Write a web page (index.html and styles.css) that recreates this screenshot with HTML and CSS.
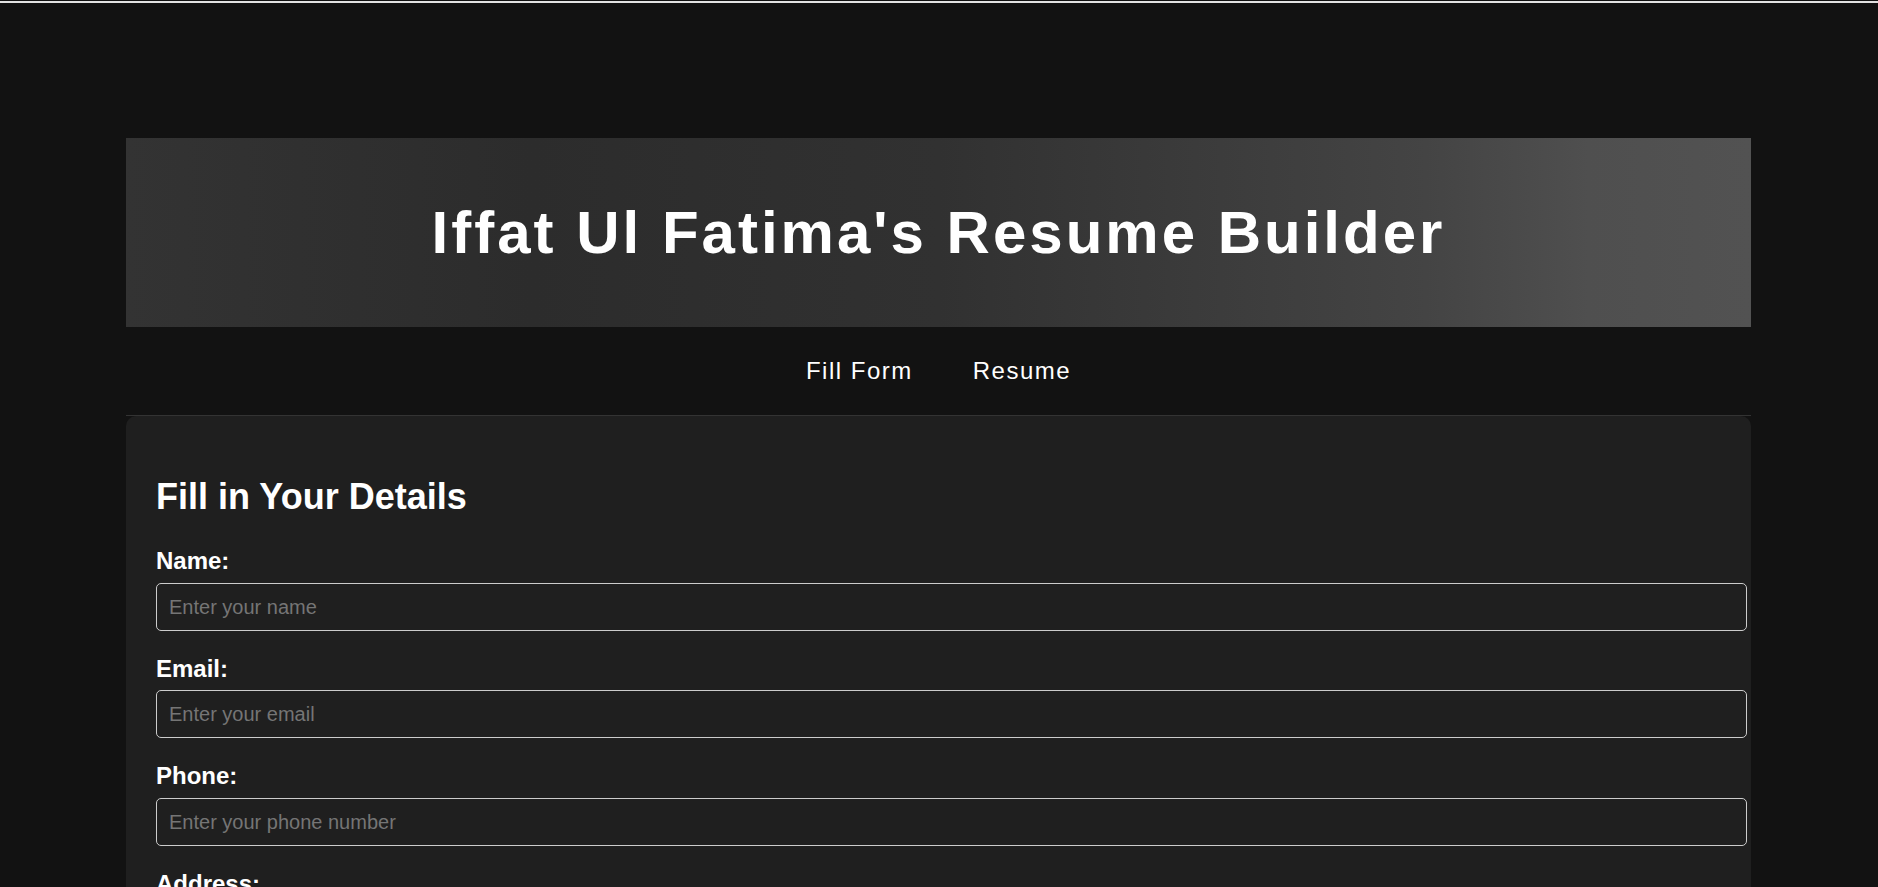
FILE: index.html
```html
<!DOCTYPE html>
<html lang="en">
<head>
<meta charset="UTF-8">
<title>Iffat Ul Fatima's Resume Builder</title>
<link rel="stylesheet" href="styles.css">
</head>
<body>
<div class="topline"></div>
<div class="page">
  <header class="hero">
    <h1 class="hero-title">Iffat Ul Fatima's Resume Builder</h1>
  </header>
  <nav class="nav">
    <a class="nav-link" href="#form">Fill Form</a>
    <a class="nav-link" href="#resume">Resume</a>
  </nav>
  <section class="card" id="form">
    <h2 class="card-title">Fill in Your Details</h2>
    <form class="form">
      <label class="field-label" for="name">Name:</label>
      <input class="field-input" type="text" id="name" placeholder="Enter your name">
      <label class="field-label" for="email">Email:</label>
      <input class="field-input" type="email" id="email" placeholder="Enter your email">
      <label class="field-label" for="phone">Phone:</label>
      <input class="field-input" type="tel" id="phone" placeholder="Enter your phone number">
      <label class="field-label" for="address">Address:</label>
      <input class="field-input" type="text" id="address" placeholder="Enter your address">
    </form>
  </section>
</div>
</body>
</html>
```

FILE: styles.css
```css
html {
  background: #121212;
}

body {
  margin: 0;
  padding-top: 1px;
  background: #121212;
  color: #ffffff;
  font-family: "Liberation Sans", Arial, sans-serif;
}

.topline {
  height: 2px;
  background: #e2e2e2;
}

.page {
  width: 1625px;
  margin: 135px 0 0 126px;
}

.hero {
  padding: 60px 0;
  text-align: center;
  background: linear-gradient(90deg, #333333 0%, #2c2c2c 25%, #313131 50%, #444444 80%, #4f4f4f 90%, #525252 100%);
}

.hero-title {
  margin: 0;
  font-size: 60px;
  font-weight: bold;
  letter-spacing: 3px;
  line-height: 69px;
  color: #ffffff;
}

.nav {
  display: flex;
  justify-content: center;
  gap: 60px;
  padding: 30px 0;
  border-bottom: 1px solid #333333;
}

.nav-link {
  font-size: 24px;
  line-height: 27.6px;
  letter-spacing: 1.5px;
  color: #ffffff;
  text-decoration: none;
}

.card {
  background: #1f1f1f;
  border-radius: 10px;
  padding: 30px;
}

.card-title {
  margin: 30px 0;
  font-size: 36px;
  font-weight: bold;
  line-height: 41.4px;
}

.field-label {
  display: block;
  margin-bottom: 8px;
  font-size: 24px;
  line-height: 27.6px;
  font-weight: bold;
}

.field-input {
  display: block;
  width: 100%;
  margin: 0 0 24px;
  padding: 12px;
  font-family: "Liberation Sans", Arial, sans-serif;
  font-size: 20px;
  line-height: 22px;
  color: #ffffff;
  background: #1f1f1f;
  border: 1px solid #cccccc;
  border-radius: 5px;
  outline: none;
}

.field-input::placeholder {
  color: #757575;
}
```
